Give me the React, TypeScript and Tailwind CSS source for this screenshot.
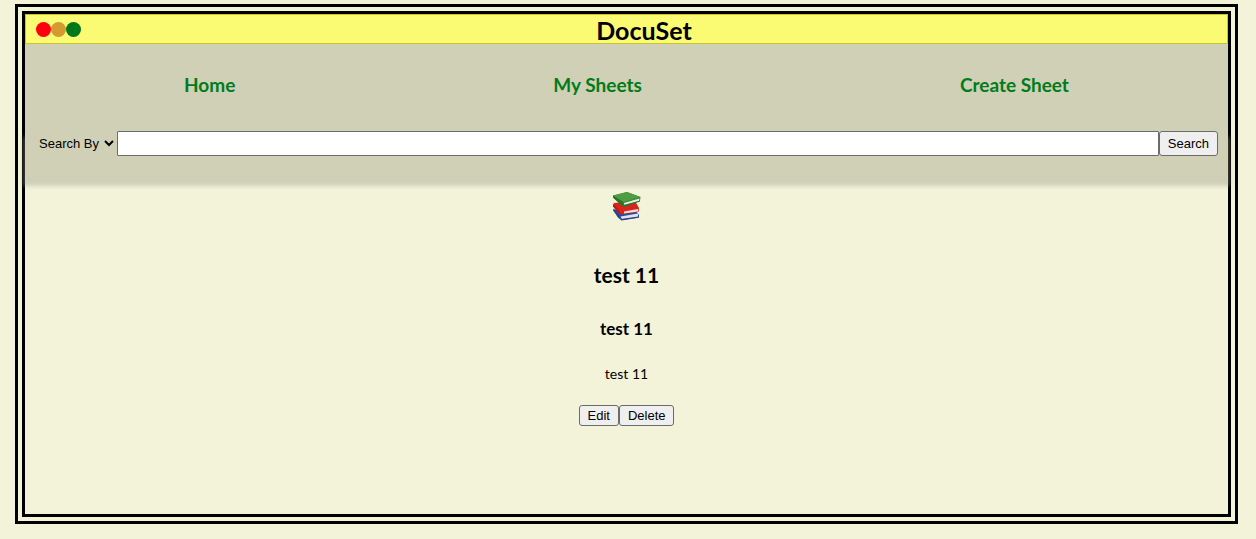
function Books() {
  return (
    <svg className="h-8 w-8" viewBox="0 0 32 32" role="img" aria-label="Books">
      <path d="M2 20 L22 17 L28 25 L28 27.500 L11 30 L7 27 Z" fill="#2b4a9b" />
      <path d="M9.500 26.500 L27 23.500 L27 27 L11 29.300 Z" fill="#dfe3ea" />
      <path d="M10 29 L27.500 26.500 L27.500 27.800 L10.500 30.500 L7 27.500 L2 20 L3 18.500 Z" fill="#253f91" />
      <path d="M3 13 L24 11 L28 18 L27.500 22 L10 24.500 L7 22.500 L2 15 Z" fill="#d8241b" />
      <path d="M13 21.500 L27 19 L27 21.500 L13 23.500 Z" fill="#f1dedb" />
      <path d="M2 14 L8 20 L9.500 24.500 L7 22.500 L2 16.500 Z" fill="#b51b16" />
      <path d="M2 5.500 L16 2 L29.500 7 L29 11 L13.500 16.500 L10 14.500 L2 7.500 Z" fill="#2f8a2f" />
      <path d="M2 5.500 L16 2 L29.500 7 L12.500 12 Z" fill="#4f9c43" />
      <path d="M13 13 L28.500 8.500 L28 11 L13.500 15.500 Z" fill="#eef0ec" />
      <path d="M12.500 15 L29 10.500 L29 11.500 L13.500 16.800 L10 15 L2 7.500 L2 5.500 L12 12 Z" fill="#28752a" />
    </svg>
  );
}

const actionClass =
  "rounded-[3px] border border-[#6b6b6b] bg-[#efefef] px-2 font-['Liberation_Sans',Arial,sans-serif] text-[13px] leading-[19px] text-black";

export default function App() {
  return (
    <div className="flex min-h-screen flex-col bg-[#f3f3da] pt-1 pr-[18px] pb-[15px] pl-[15px] font-[Lato,sans-serif] text-black">
      <div className="flex flex-1 flex-col border-[10px] border-double border-black">
        <header className="flex h-[30px] items-center border border-[#c5c52f] bg-[#fafa73] pr-5 pl-2.5">
          <div className="flex">
            <span className="size-[15px] rounded-full bg-[#ff0010]" />
            <span className="size-[15px] rounded-full bg-[#d59a2f]" />
            <span className="size-[15px] rounded-full bg-[#007718]" />
          </div>
          <h1 className="flex-1 pt-0.5 text-center text-[25px] leading-7 font-bold">DocuSet</h1>
        </header>

        <nav className="flex h-[87px] items-center justify-around bg-[#d0d0b6] pb-1.5 text-[19px] leading-6 font-bold text-[#007c1b]">
          <a href="#home">Home</a>
          <a href="#sheets">My Sheets</a>
          <a href="#create">Create Sheet</a>
        </nav>

        <form
          className="flex bg-[#d0d0b6] px-2.5 pb-5 font-['Liberation_Sans',Arial,sans-serif] text-[13px] shadow-[0_8px_4px_2px_rgba(156,156,135,0.41)]"
          onSubmit={(event) => event.preventDefault()}
        >
          <select aria-label="Search By" className="h-[25px] w-[82px] border-0 bg-transparent">
            <option>Search By</option>
          </select>
          <input
            aria-label="Search text"
            className="h-[25px] min-w-0 flex-1 rounded-[1px] border border-[#6b6b6b] bg-white px-1"
          />
          <button type="submit" className={actionClass}>
            Search
          </button>
        </form>

        <main className="flex flex-col items-center pt-3.5 pb-20">
          <Books />
          <h2 className="mt-[37px] text-[21px] leading-8 font-bold">test 11</h2>
          <h3 className="mt-6 text-[17px] leading-7 font-bold">test 11</h3>
          <p className="mt-[19px] text-sm leading-6">test 11</p>
          <div className="mt-[19px] flex">
            <button type="button" className={actionClass}>
              Edit
            </button>
            <button type="button" className={actionClass}>
              Delete
            </button>
          </div>
        </main>
      </div>
    </div>
  );
}
